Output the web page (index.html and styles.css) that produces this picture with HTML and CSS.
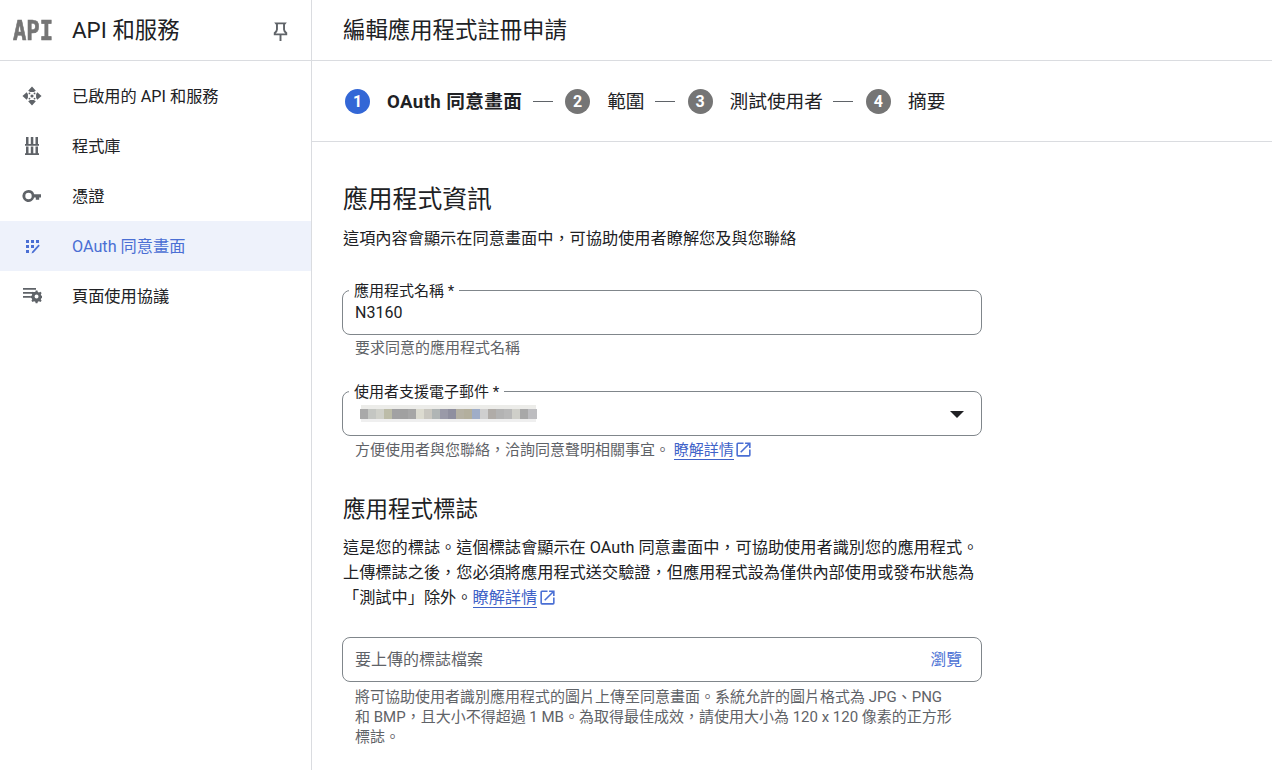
FILE: index.html
```html
<!DOCTYPE html>
<html lang="zh-Hant">
  <head>
    <meta charset="UTF-8" />
    <meta name="viewport" content="width=device-width, initial-scale=1.0" />
    <title>編輯應用程式註冊申請</title>
    <link rel="stylesheet" href="styles.css">
  </head>
  <body>
    <aside class="sidebar">
      <div class="side-head">
        <span class="api-logo">API</span>
        <span class="side-title">API 和服務</span>
        <svg class="pin" viewBox="0 0 24 24"><path d="M7.500 3.500h9l-.8 1v5.500c0 1.500 1 2.500 2.300 3.500v1.500H6v-1.500c1.300-1 2.300-2 2.300-3.500V4.500zM12 15v7"/></svg>
      </div>
      <nav class="side-nav">
        <a class="nav-item">
          <svg class="nav-icon" viewBox="1 1 22 22"><path d="M12 1.500 7.800 6.200l2.200 1.300h4l2.200-1.300zM6.200 7.800 1.500 12l4.700 4.200 1.300-2.200v-4zM17.800 7.800 16.500 10v4l1.300 2.200 4.700-4.200zM10 16.500l-2.200 1.300 4.200 4.700 4.200-4.700-2.200-1.300z"/><circle cx="12" cy="12" r="1.700"/><circle cx="9.200" cy="9.200" r="1"/><circle cx="14.800" cy="9.200" r="1"/><circle cx="9.200" cy="14.800" r="1"/><circle cx="14.800" cy="14.800" r="1"/></svg>
          <span class="nav-label">已啟用的 API 和服務</span>
        </a>
        <a class="nav-item">
          <svg class="nav-icon" viewBox="0 0 20 20"><path d="M4 1h2.500v7H4zM8.800 1h2.500v7H8.800zM13.500 1H16v7h-2.500zM3 8h14v1.800H3zM4 10.500h2.500v7H4zM8.800 10.500h2.500v7H8.800zM13.500 10.500H16v7h-2.500zM3 17.300h14v1.800H3z"/></svg>
          <span class="nav-label">程式庫</span>
        </a>
        <a class="nav-item">
          <svg class="nav-icon" viewBox="0 0 20 20"><path fill-rule="evenodd" d="M6.500 4a6 6 0 0 1 5.700 4.200H19v3.400h-1.800v2.200h-3.400v-2.200h-1.600A6 6 0 1 1 6.500 4zm0 2.800a3.200 3.200 0 1 0 0 6.400 3.200 3.200 0 0 0 0-6.400z"/></svg>
          <span class="nav-label">憑證</span>
        </a>
        <a class="nav-item active">
          <svg class="nav-icon" viewBox="0 0 20 20"><path d="M4 4h3v3H4zM9 4h3v3H9zM14 4h3v3h-3zM4 9h3v3H4zM9 9h3v3H9zM4 14h3v3H4zM10.200 15.500l6.300-7 1.300 1.200-6.300 7.100-2 .7z"/></svg>
          <span class="nav-label">OAuth 同意畫面</span>
        </a>
        <a class="nav-item">
          <svg class="nav-icon" viewBox="0 0 20 20"><path d="M1 2h13v1.700H1zM1 6h13v1.700H1zM1 10h7v1.700H1z"/><path fill-rule="evenodd" d="M13.500 7.500h2l.4 1.800 1.300.6 1.600-.9 1.300 1.300-.9 1.600.6 1.400 1.700.4v2l-1.700.4-.6 1.300.9 1.600-1.300 1.300-1.600-.9-1.300.6-.4 1.700h-2l-.4-1.700-1.400-.6-1.600.9-1.300-1.300.9-1.600-.6-1.300-1.700-.4v-2l1.700-.4.6-1.400-.9-1.600 1.300-1.300 1.600.9 1.400-.6zm1 4.600a2.200 2.200 0 1 0 0 4.400 2.200 2.200 0 0 0 0-4.400z" transform="translate(1.500 -2.300) scale(.9)"/></svg>
          <span class="nav-label">頁面使用協議</span>
        </a>
      </nav>
    </aside>

    <main class="content">
      <header class="page-head">
        <h1>編輯應用程式註冊申請</h1>
      </header>

      <div class="stepper">
        <span class="step-num current">1</span>
        <span class="step-label current">OAuth 同意畫面</span>
        <span class="step-line"></span>
        <span class="step-num">2</span>
        <span class="step-label">範圍</span>
        <span class="step-line"></span>
        <span class="step-num">3</span>
        <span class="step-label">測試使用者</span>
        <span class="step-line"></span>
        <span class="step-num">4</span>
        <span class="step-label">摘要</span>
      </div>

      <form class="form">
        <h2 class="section-big">應用程式資訊</h2>
        <p class="lead">這項內容會顯示在同意畫面中&#xFF0C;可協助使用者瞭解您及與您聯絡</p>

        <div class="field first">
          <label class="field-label">應用程式名稱 *</label>
          <span class="field-value">N3160</span>
        </div>
        <p class="hint">要求同意的應用程式名稱</p>

        <div class="field second">
          <label class="field-label">使用者支援電子郵件 *</label>
          <span class="blurred"></span>
          <span class="caret"></span>
        </div>
        <p class="hint with-link">方便使用者與您聯絡&#xFF0C;洽詢同意聲明相關事宜。
          <a class="link">瞭解詳情</a>
          <svg class="ext" viewBox="0 0 24 24"><path d="M19 19H5V5h7V3H5a2 2 0 0 0-2 2v14a2 2 0 0 0 2 2h14a2 2 0 0 0 2-2v-7h-2v7zM14 3v2h3.590l-9.830 9.830 1.410 1.410L19 6.410V10h2V3h-7z"/></svg>
        </p>

        <h2 class="section">應用程式標誌</h2>
        <p class="body-text">這是您的標誌。這個標誌會顯示在 OAuth 同意畫面中&#xFF0C;可協助使用者識別您的應用程式。<br>上傳標誌之後&#xFF0C;您必須將應用程式送交驗證&#xFF0C;但應用程式設為僅供內部使用或發布狀態為<br>「測試中」除外。<a class="link">瞭解詳情</a>
          <svg class="ext" viewBox="0 0 24 24"><path d="M19 19H5V5h7V3H5a2 2 0 0 0-2 2v14a2 2 0 0 0 2 2h14a2 2 0 0 0 2-2v-7h-2v7zM14 3v2h3.590l-9.830 9.830 1.410 1.410L19 6.410V10h2V3h-7z"/></svg>
        </p>

        <div class="field upload">
          <span class="placeholder">要上傳的標誌檔案</span>
          <a class="browse">瀏覽</a>
        </div>
        <p class="hint multi">將可協助使用者識別應用程式的圖片上傳至同意畫面。系統允許的圖片格式為 JPG、PNG<br>和 BMP&#xFF0C;且大小不得超過 1 MB。為取得最佳成效&#xFF0C;請使用大小為 120 x 120 像素的正方形<br>標誌。</p>
      </form>
    </main>
  </body>
</html>
```

FILE: styles.css
```css
body {
  margin: 0;
  display: flex;
  height: 770px;
  overflow: hidden;
  background: #fff;
  color: #202124;
  font-family: Roboto, "Noto Sans CJK TC", sans-serif;
  font-size: 16px;
}
h1,
h2,
p {
  margin: 0;
  font-weight: 400;
}

/* sidebar */
.sidebar {
  width: 311px;
  flex-shrink: 0;
  border-right: 1px solid #dadce0;
}
.side-head {
  height: 60px;
  display: flex;
  align-items: center;
  padding-left: 13px;
  border-bottom: 1px solid #dadce0;
}
.api-logo {
  width: 40px;
  font-family: "DejaVu Sans Mono", monospace;
  font-weight: 700;
  font-size: 27px;
  line-height: 27px;
  color: #757575;
  -webkit-text-stroke: 0.7px #757575;
  transform: scaleX(0.82);
  transform-origin: left center;
}
.side-title {
  margin: 0 0 4px 19px;
  font-size: 22.4px;
  flex: 1;
}
.pin {
  width: 23px;
  height: 23px;
  margin: 3px 19px 0 0;
  fill: none;
  stroke: #5f6368;
  stroke-width: 2;
}
.side-nav {
  padding-top: 10px;
}
.nav-item {
  height: 50px;
  display: flex;
  align-items: center;
  padding-left: 22px;
  font-size: 16.2px;
  color: #202124;
}
.nav-label {
  margin-bottom: 2px;
}
.nav-item.active {
  background: #eef2fb;
  color: #4a6fd4;
}
.nav-icon {
  width: 20px;
  height: 20px;
  margin-right: 30px;
  fill: #5f6368;
}
.nav-item.active .nav-icon {
  fill: #4a6fd4;
}

/* main column */
.content {
  flex: 1;
  min-width: 0;
}
.page-head {
  box-sizing: border-box;
  height: 61px;
  display: flex;
  align-items: center;
  padding: 0 0 4px 31px;
  border-bottom: 1px solid #dadce0;
}
.page-head h1 {
  font-size: 22.4px;
}
.stepper {
  height: 80px;
  display: flex;
  align-items: center;
  padding-left: 33px;
  border-bottom: 1px solid #dadce0;
}
.step-num {
  width: 25px;
  height: 25px;
  border-radius: 50%;
  background: #757575;
  color: #fff;
  font-size: 16px;
  font-weight: 700;
  display: flex;
  align-items: center;
  justify-content: center;
}
.step-num.current {
  background: #3367d6;
}
.step-label {
  margin: 0 0 3px 17px;
  font-size: 18.7px;
}
.step-label.current {
  font-weight: 700;
  font-size: 18.6px;
  letter-spacing: 0.4px;
}
.step-line {
  width: 20px;
  height: 1px;
  background: #5f6368;
  margin: 0 12.5px 0 10.5px;
}

/* form */
.form {
  padding-left: 30px;
  width: 640px;
}
.section-big {
  margin-top: 41px;
  padding-left: 1px;
  font-size: 24.8px;
  line-height: 34px;
}
.lead {
  margin-top: 10px;
  padding-left: 1px;
  font-size: 16.2px;
  line-height: 24px;
}
.field {
  position: relative;
  box-sizing: border-box;
  height: 45px;
  border: 1px solid #80868b;
  border-radius: 8px;
  display: flex;
  align-items: center;
  padding: 0 12px;
}
.field.first {
  margin-top: 39px;
}
.field.second {
  margin-top: 33px;
}
.field-label {
  position: absolute;
  left: 6px;
  top: -8px;
  padding: 0 5px;
  background: #fff;
  font-size: 15px;
  line-height: 16px;
}
.field-value {
  font-size: 16px;
}
.hint {
  margin-top: 3px;
  padding-left: 13px;
  font-size: 15px;
  line-height: 20px;
  color: #5f6368;
}
.hint.with-link {
  margin-top: 4px;
}
.hint.multi {
  margin-top: 5px;
}
.blurred {
  width: 177px;
  height: 10px;
  margin-left: 5px;
  filter: blur(0.7px);
  box-shadow: 0 -5px 0 -1px #ecece9, 0 4px 0 -1px #efefef;
  background: linear-gradient(90deg,
    #a9a9a9 0 8px, #c4c6c2 8px 16px, #cfd0c9 16px 24px, #bcbca8 24px 32px,
    #a1a1a3 32px 40px, #a0a0a0 40px 48px, #a6a6a6 48px 56px, #dcdbd0 56px 64px,
    #c9c7c0 64px 72px, #b0b5b5 72px 80px, #9a9aa8 80px 88px, #8f8f9f 88px 96px,
    #b5b1a3 96px 104px, #b3af9d 104px 112px, #9fadc8 112px 120px, #cfcfcf 120px 128px,
    #b0aca8 128px 136px, #b3b3b3 136px 144px, #b8b8b8 144px 152px, #cfcfc9 152px 160px,
    #a8a8a8 160px 168px, #bdbdc0 168px 177px);
}
.caret {
  position: absolute;
  right: 17px;
  top: 19px;
  border-left: 7px solid transparent;
  border-right: 7px solid transparent;
  border-top: 7px solid #202124;
}
.link {
  color: #3f62c8;
  border-bottom: 1px solid #3f62c8;
}
.ext {
  width: 19px;
  height: 19px;
  margin-left: -3px;
  fill: #4a6fd4;
  vertical-align: -4px;
}
.section {
  margin-top: 32px;
  padding-left: 1px;
  font-size: 22.5px;
  line-height: 34px;
}
.body-text {
  margin-top: 9px;
  padding-left: 1px;
  font-size: 16.2px;
  line-height: 25px;
}
.field.upload {
  margin-top: 27px;
  justify-content: space-between;
}
.placeholder {
  margin-bottom: 3px;
  font-size: 16px;
  color: #5f6368;
}
.browse {
  margin: 0 7px 3px 0;
  color: #4a6fd4;
  font-size: 15.8px;
}
```
